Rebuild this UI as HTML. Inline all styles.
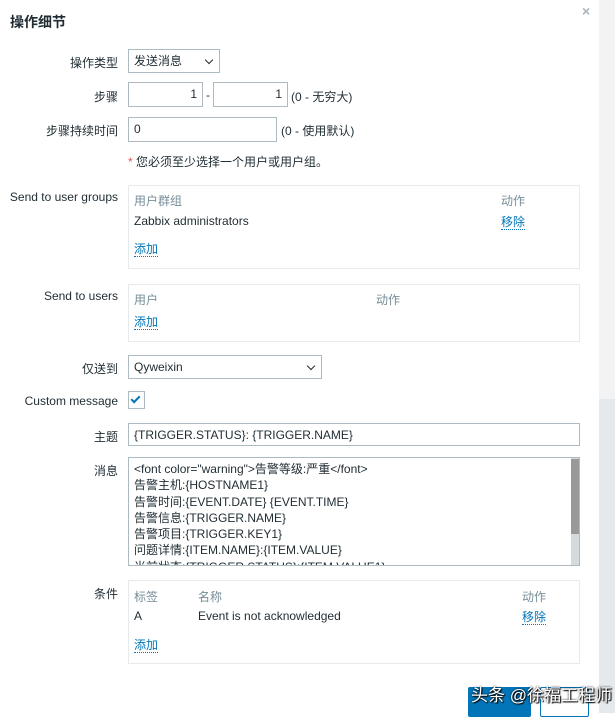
<!DOCTYPE html>
<html><head><meta charset="utf-8"><style>
*{box-sizing:border-box;margin:0;padding:0}
body{width:615px;height:713px;overflow:hidden;background:#fff;font-family:"Liberation Sans","Noto Sans CJK SC",sans-serif;font-size:12px;color:#1f2c33;position:relative}
.a{position:absolute;white-space:nowrap}
.lbl{position:absolute;right:497px;white-space:nowrap;text-align:right}
.in{position:absolute;border:1px solid #acbbc2;background:#fff;padding:0 5px;line-height:22px}
.box{position:absolute;border:1px solid #e6eaec;background:#fff}
.g{color:#768d99}
.lk{color:#0275b8;border-bottom:1px dotted #0275b8;line-height:14px}
.chev{position:absolute;right:7px;top:7px;width:6px;height:6px;border-right:1.3px solid #1f2c33;border-bottom:1.3px solid #1f2c33;transform:rotate(45deg)}
</style></head><body>
<div class="a" style="left:599px;top:0;width:16px;height:399px;background:#f1f3f5"></div>
<div class="a" style="left:599px;top:399px;width:16px;height:314px;background:#e5e9ec"></div>
<div class="a" style="left:10px;top:12px;font-size:14px;font-weight:bold">操作细节</div>
<div class="a" style="left:582px;top:3px;font-size:14px;color:#aab5bb;font-weight:bold">×</div>

<div class="lbl" style="top:54px">操作类型</div>
<div class="in" style="left:128px;top:49px;width:92px;height:24px">发送消息<span class="chev"></span></div>

<div class="lbl" style="top:88px">步骤</div>
<div class="in" style="left:128px;top:82px;width:75px;height:25px;text-align:right">1</div>
<div class="a" style="left:206px;top:88px">-</div>
<div class="in" style="left:213px;top:82px;width:75px;height:25px;text-align:right">1</div>
<div class="a" style="left:291px;top:88px">(0 - 无穷大)</div>

<div class="lbl" style="top:122px">步骤持续时间</div>
<div class="in" style="left:128px;top:117px;width:149px;height:25px">0</div>
<div class="a" style="left:281px;top:122px">(0 - 使用默认)</div>

<div class="a" style="left:128px;top:153px"><span style="color:#e45959">*</span> 您必须至少选择一个用户或用户组。</div>

<div class="lbl" style="top:190px">Send to user groups</div>
<div class="box" style="left:128px;top:185px;width:452px;height:84px">
<div class="a g" style="left:5px;top:6px">用户群组</div>
<div class="a g" style="left:372px;top:6px">动作</div>
<div class="a" style="left:5px;top:28px">Zabbix administrators</div>
<div class="a lk" style="left:372px;top:29px">移除</div>
<div class="a lk" style="left:5px;top:56px">添加</div>
</div>

<div class="lbl" style="top:289px">Send to users</div>
<div class="box" style="left:128px;top:284px;width:452px;height:58px">
<div class="a g" style="left:5px;top:6px">用户</div>
<div class="a g" style="left:247px;top:6px">动作</div>
<div class="a lk" style="left:5px;top:30px">添加</div>
</div>

<div class="lbl" style="top:360px">仅送到</div>
<div class="in" style="left:128px;top:355px;width:194px;height:24px">Qyweixin<span class="chev"></span></div>

<div class="lbl" style="top:394px">Custom message</div>
<div class="a" style="left:128px;top:391px;width:17px;height:18px;border:1px solid #acbbc2"><div class="a" style="left:4px;top:2px;width:5px;height:9px;border-right:2px solid #0275b8;border-bottom:2px solid #0275b8;transform:rotate(45deg)"></div></div>

<div class="lbl" style="top:428px">主题</div>
<div class="in" style="left:128px;top:423px;width:452px;height:23px">{TRIGGER.STATUS}: {TRIGGER.NAME}</div>

<div class="lbl" style="top:462px">消息</div>
<div class="in" style="left:128px;top:457px;width:452px;height:109px;overflow:hidden;line-height:16.3px;padding-top:3px">
&lt;font color="warning"&gt;告警等级:严重&lt;/font&gt;<br>告警主机:{HOSTNAME1}<br>告警时间:{EVENT.DATE} {EVENT.TIME}<br>告警信息:{TRIGGER.NAME}<br>告警项目:{TRIGGER.KEY1}<br>问题详情:{ITEM.NAME}:{ITEM.VALUE}<br>当前状态:{TRIGGER.STATUS}:{ITEM.VALUE1}
<div class="a" style="left:442px;top:0;width:9px;height:107px;background:#d5dadd"></div>
<div class="a" style="left:442px;top:1px;width:9px;height:75px;background:#999"></div>
</div>

<div class="lbl" style="top:585px">条件</div>
<div class="box" style="left:128px;top:580px;width:452px;height:84px">
<div class="a g" style="left:5px;top:7px">标签</div>
<div class="a g" style="left:69px;top:7px">名称</div>
<div class="a g" style="left:393px;top:7px">动作</div>
<div class="a" style="left:5px;top:28px">A</div>
<div class="a" style="left:69px;top:28px">Event is not acknowledged</div>
<div class="a lk" style="left:393px;top:29px">移除</div>
<div class="a lk" style="left:5px;top:57px">添加</div>
</div>

<div class="a" style="left:468px;top:687px;width:63px;height:30px;background:#0275b8;border-radius:2px"></div>
<div class="a" style="left:540px;top:687px;width:49px;height:30px;border:1px solid #0275b8;border-radius:2px"></div>
<div class="a" style="left:471px;top:681px;font-size:17px;color:#fff;text-shadow:0 0 2px #000,1px 1px 1px #000">头条 @徐福工程师</div>
</body></html>
